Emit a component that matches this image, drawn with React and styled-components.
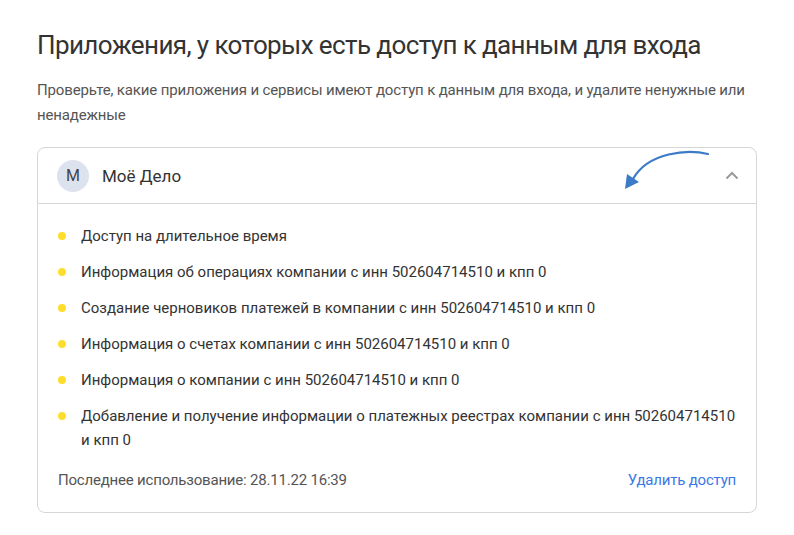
import React from "react";
import styled, {createGlobalStyle} from "styled-components";

const GlobalStyle = createGlobalStyle`
    body {
        margin: 0;
        background: #fff;
        font-family: Roboto, "Liberation Sans", sans-serif;
        color: #333;
    }
`;

const Page = styled.div`
    padding: 26px 38px 0 37px;
`;

const Title = styled.h1`
    margin: 0;
    font-size: 26px;
    font-weight: 400;
    letter-spacing: -0.6px;
    line-height: 38px;
    color: #333;
`;

const Lead = styled.p`
    margin: 14px 0 19px;
    font-size: 15px;
    letter-spacing: -0.15px;
    line-height: 25px;
    color: #555;
`;

const Card = styled.div`
    border: 1px solid #d6d6d6;
    border-radius: 8px;
    width: 718px;
`;

const Header = styled.div`
    position: relative;
    display: flex;
    align-items: center;
    height: 55px;
    padding: 0 17px 0 19px;
    border-bottom: 1px solid #d6d6d6;
`;

const Avatar = styled.div`
    width: 32px;
    height: 32px;
    border-radius: 50%;
    background: #dde3ee;
    display: flex;
    align-items: center;
    justify-content: center;
    font-size: 16px;
    color: #444;
    margin-right: 13px;
`;

const AppName = styled.div`
    flex: 1;
    font-size: 17px;
    color: #333;
`;

const Arrow = styled.svg`
    position: absolute;
    left: 570px;
    top: 0;
`;

const Body = styled.div`
    padding: 20px 20px 22px 20px;
`;

const List = styled.ul`
    list-style: none;
    margin: 0;
    padding: 0;
`;

const Item = styled.li`
    position: relative;
    padding-left: 23px;
    font-size: 15px;
    line-height: 24px;
    color: #333;
    margin-bottom: 12px;

    &::before {
        content: "";
        position: absolute;
        left: 0;
        top: 8px;
        width: 8px;
        height: 8px;
        border-radius: 50%;
        background: #ffdd2d;
    }
`;

const Footer = styled.div`
    display: flex;
    justify-content: space-between;
    align-items: center;
    margin-top: 18px;
    font-size: 15px;
    letter-spacing: -0.2px;
    line-height: 20px;
    color: #555;
`;

const Remove = styled.a`
    color: #3a78e6;
    cursor: pointer;
`;

const items = [
    "Доступ на длительное время",
    "Информация об операциях компании с инн 502604714510 и кпп 0",
    "Создание черновиков платежей в компании с инн 502604714510 и кпп 0",
    "Информация о счетах компании с инн 502604714510 и кпп 0",
    "Информация о компании с инн 502604714510 и кпп 0",
    "Добавление и получение информации о платежных реестрах компании с инн 502604714510 и кпп 0",
];

export default function App() {
    return (
        <Page>
            <GlobalStyle/>
            <Title>Приложения, у которых есть доступ к данным для входа</Title>
            <Lead>Проверьте, какие приложения и сервисы имеют доступ к данным для входа, и удалите ненужные или ненадежные</Lead>
            <Card>
                <Header>
                    <Avatar>M</Avatar>
                    <AppName>Моё Дело</AppName>
                    <svg width="14" height="9" viewBox="0 0 14 9">
                        <path d="M1.5 7.5 L7 2 L12.5 7.5" fill="none" stroke="#9a9a9a" strokeWidth="2"/>
                    </svg>
                    <Arrow width="120" height="54" viewBox="0 0 120 54">
                        <path d="M100 6 C80 1 40 4 25 31" fill="none" stroke="#3b7bc8" strokeWidth="2.2" strokeLinecap="round"/>
                        <path d="M17 41 L19 26 L31 34 Z" fill="#3b7bc8"/>
                    </Arrow>
                </Header>
                <Body>
                    <List>
                        {items.map(text => <Item key={text}>{text}</Item>)}
                    </List>
                    <Footer>
                        <span>Последнее использование: 28.11.22 16:39</span>
                        <Remove>Удалить доступ</Remove>
                    </Footer>
                </Body>
            </Card>
        </Page>
    );
}
